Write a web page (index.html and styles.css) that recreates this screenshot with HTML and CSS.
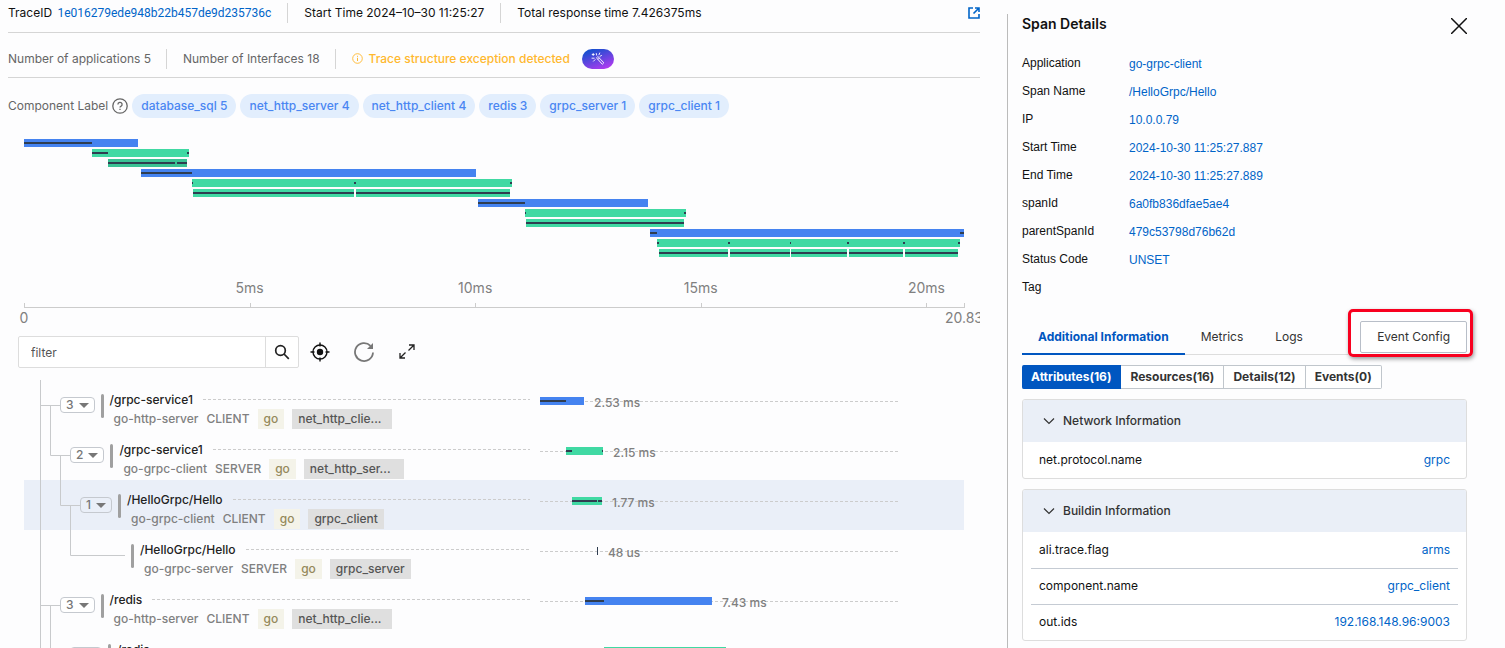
FILE: index.html
```html
<!DOCTYPE html>
<html lang="en">
<head>
<meta charset="utf-8">
<title>Trace Details</title>
<link rel="stylesheet" href="styles.css">
</head>
<body>
<div class="page">
<main class="trace">
  <header class="summary">
    <span class="item">TraceID <a class="hash" href="#">1e016279ede948b22b457de9d235736c</a></span>
    <span class="item">Start Time 2024–10–30 11:25:27</span>
    <span class="item">Total response time 7.426375ms</span>
    <a class="open" href="#" aria-label="Open in new window"><svg width="12" height="12" viewBox="0 0 12 12" fill="none" stroke="currentColor" stroke-width="1.6"><path d="M5 1H1v10h10V7M7 1h4v4M11 1 5.500 6.500"/></svg></a>
  </header>
  <div class="summary counts">
    <span class="item">Number of applications 5</span>
    <span class="item">Number of Interfaces 18</span>
    <span class="item warn"><svg width="11" height="11" viewBox="0 0 11 11" fill="none" stroke="currentColor"><circle cx="5.500" cy="5.500" r="4.800" stroke-width=".9"/><path d="M5.500 4.800v3.200M5.500 2.800v1"/></svg>Trace structure exception detected</span>
    <button class="magic" aria-label="Analyze"><svg width="14" height="14" viewBox="0 0 14 14" fill="none" stroke="#fff" stroke-width=".9" stroke-linecap="round"><path d="m5.800 5.600 1.100-1.100 5.900 6.300-1.200 1.200zM7.200 7.200l1.100-1.100M8 2.800 8.700 1M9 4.300l1.500-.8M1.200 2.500h2M2.200 1.500v2M1 6.200h2.200M2.500 9.200l1.600-1.600M5.300 1.500l.3 1.600"/></svg></button>
  </div>
  <div class="components">
    <span>Component Label</span>
    <svg width="16" height="16" viewBox="0 0 16 16" fill="none" stroke="#666" stroke-width="1.300"><circle cx="8" cy="8" r="7.200"/><path d="M5.900 6.400a2.100 2.100 0 1 1 3 1.900c-.6.3-.9.600-.9 1.300M8 10.700v1.400"/></svg>
    <span class="chip">database_sql 5</span><span class="chip">net_http_server 4</span><span class="chip">net_http_client 4</span><span class="chip">redis 3</span><span class="chip">grpc_server 1</span><span class="chip">grpc_client 1</span>
  </div>
  <section class="chart" aria-label="Trace timeline">
    <svg class="flame" viewBox="0 0 940 118" preserveAspectRatio="none" shape-rendering="crispEdges">
      <g class="blue"><path d="M0 0h114v8H0zM117 30h335v8H117zM454 60h170v8H454zM626 90h314v8H626z"/></g>
      <g class="green"><path d="M68 10h97v8H68zM168 40h320v8H168zM169 50h161v8H169zM332 50h154v8H332zM501 70h161v8H501zM502 80h158v8H502zM633 100h303v8H633zM635 110h69v8h-69zM706 110h60v8h-60zM767 110h56v8h-56zM825 110h54v8h-54zM881 110h53v8h-53z"/></g>
      <path class="dimgreen" d="M84 20h79v8H84z"/>
      <path class="dark" d="M0 3h68v2H0zM68 13h16v2H68zM163 13h2v2h-2zM84 23h67v2H84zM153 23h10v2h-10zM117 33h51v2h-51zM168 43h1v2h-1zM330 43h2v2h-2zM486 43h2v2h-2zM169 53h161v2H169zM332 53h154v2H332zM454 63h47v2h-47zM501 73h1v2h-1zM660 73h2v2h-2zM502 83h158v2H502zM626 93h7v2h-7zM936 93h4v2h-4zM633 103h2v2h-2zM704 103h2v2h-2zM766 103h1v2h-1zM823 103h2v2h-2zM879 103h2v2h-2zM934 103h2v2h-2zM635 113h69v2h-69zM706 113h60v2h-60zM767 113h56v2h-56zM825 113h54v2h-54zM881 113h53v2h-53z"/>
    </svg>
    <svg class="axis" width="100%" height="50">
      <g shape-rendering="crispEdges"><rect x="0" y="28" width="100%" height="1"/><rect x="0" y="24" width="1" height="4"/><rect x="24.050%" y="24" width="1" height="4"/><rect x="48%" y="24" width="1" height="4"/><rect x="72%" y="24" width="1" height="4"/><rect x="96%" y="24" width="1" height="4"/><rect x="100%" y="24" width="1" height="5"/></g>
      <text x="24%" y="14">5ms</text><text x="48%" y="14">10ms</text><text x="72%" y="14">15ms</text><text x="96%" y="14">20ms</text><text x="0" y="44">0</text><text x="100%" y="44">20.83</text>
    </svg>
  </section>
  <div class="tools">
    <form class="filter"><input type="text" placeholder="filter" aria-label="filter"><button type="button" aria-label="Search"><svg width="16" height="16" viewBox="0 0 16 16" fill="none" stroke="#222" stroke-width="1.700"><circle cx="6.500" cy="6.500" r="4.800"/><path d="m10 10 4.800 4.800"/></svg></button></form>
    <button class="tool" aria-label="Locate"><svg width="20" height="20" viewBox="0 0 20 20" fill="none" stroke="#111" stroke-width="1.400"><circle cx="10" cy="10" r="7"/><circle cx="10" cy="10" r="3.200" fill="#111" stroke="none"/><path d="M10 .5v4M10 15.500v4M.5 10h4M15.500 10h4"/></svg></button>
    <button class="tool" aria-label="Refresh"><svg width="20" height="20" viewBox="0 0 20 20" fill="none" stroke="#777" stroke-width="1.800"><path d="M16.500 3.800A9 9 0 1 0 19 10.500"/><path d="M19 1v6h-6z" fill="#777" stroke="none"/></svg></button>
    <button class="tool" aria-label="Expand"><svg width="18" height="18" viewBox="0 0 18 18" fill="none" stroke="#222" stroke-width="1.300"><path d="M11 2h5v5M16 2l-5.500 5.500M7 15H2v-5M2 15l5.500-5.500"/></svg></button>
  </div>
  <div class="tree">
    <div class="row">
      <div class="node"><svg class="guide" width="36" height="50"><path d="M16.500 0v50M16 25.500h20M26.500 25v25"/></svg><button class="toggle">3<i></i></button><b class="mark"></b>
        <div class="info"><div class="name">/grpc-service1</div><div class="meta"><span>go-http-server</span><span>CLIENT</span><span class="lang">go</span><span class="comp cut">net_http_clie...</span></div></div></div>
      <div class="track"><svg class="bar" style="width:12.300%" viewBox="0 0 44 8" preserveAspectRatio="none"><path class="blue" d="M0 0h44v8H0z"/><path class="dark" d="M0 3h26v2H0z"/></svg><span>2.53 ms</span></div>
    </div>
    <div class="row">
      <div class="node"><svg class="guide" width="46" height="50"><path d="M16.500 0v50M26.500 0v25.500H46M36.500 25v25"/></svg><button class="toggle">2<i></i></button><b class="mark"></b>
        <div class="info"><div class="name">/grpc-service1</div><div class="meta"><span>go-grpc-client</span><span>SERVER</span><span class="lang">go</span><span class="comp cut">net_http_ser...</span></div></div></div>
      <div class="track"><svg class="bar" style="margin-left:7.260%;width:10.340%" viewBox="0 0 37 8" preserveAspectRatio="none"><path class="green" d="M0 0h37v8H0z"/><path class="dark" d="M0 3h6v2H0zM36 3h1v2h-1z"/></svg><span>2.15 ms</span></div>
    </div>
    <div class="row selected">
      <div class="node"><svg class="guide" width="56" height="50"><path d="M16.500 0v50M36.500 0v25.500H56M46.500 25v25"/></svg><button class="toggle">1<i></i></button><b class="mark"></b>
        <div class="info"><div class="name">/HelloGrpc/Hello</div><div class="meta"><span>go-grpc-client</span><span>CLIENT</span><span class="lang">go</span><span class="comp">grpc_client</span></div></div></div>
      <div class="track"><svg class="bar" style="margin-left:8.940%;width:8.380%" viewBox="0 0 30 8" preserveAspectRatio="none"><path class="green" d="M0 0h30v8H0z"/><path class="dark" d="M0 3h25v2H0zM26 3h4v2h-4z"/></svg><span>1.77 ms</span></div>
    </div>
    <div class="row">
      <div class="node"><svg class="guide" width="101" height="50"><path d="M16.500 0v50M46.500 0v25.500H101"/></svg><b class="mark"></b>
        <div class="info"><div class="name">/HelloGrpc/Hello</div><div class="meta"><span>go-grpc-server</span><span>SERVER</span><span class="lang">go</span><span class="comp">grpc_server</span></div></div></div>
      <div class="track"><svg class="bar" style="margin-left:15.920%;width:.280%" viewBox="0 0 1 8" preserveAspectRatio="none"><path class="dark" d="M0 0h1v8H0z"/></svg><span>48 us</span></div>
    </div>
    <div class="row">
      <div class="node"><svg class="guide" width="36" height="50"><path d="M16.500 0v50M16 25.500h20M26.500 25v25"/></svg><button class="toggle">3<i></i></button><b class="mark"></b>
        <div class="info"><div class="name">/redis</div><div class="meta"><span>go-http-server</span><span>CLIENT</span><span class="lang">go</span><span class="comp cut">net_http_clie...</span></div></div></div>
      <div class="track"><svg class="bar" style="margin-left:12.570%;width:35.470%" viewBox="0 0 127 8" preserveAspectRatio="none"><path class="blue" d="M0 0h127v8H0z"/><path class="dark" d="M0 3h19v2H0z"/></svg><span>7.43 ms</span></div>
    </div>
    <div class="row">
      <div class="node"><svg class="guide" width="46" height="50"><path d="M16.500 0v50M26.500 0v25.500H46M36.500 25v25"/></svg><button class="toggle" aria-label="Toggle"><i></i></button><b class="mark"></b>
        <div class="info"><div class="name">/redis</div></div></div>
      <div class="track"><svg class="bar" style="margin-left:17.880%;width:34.080%" viewBox="0 0 122 8" preserveAspectRatio="none"><path class="green" d="M0 0h122v8H0z"/></svg></div>
    </div>
  </div>
</main>
<aside class="details">
  <div class="head"><h2>Span Details</h2><button class="close" aria-label="Close"><svg width="16" height="16" viewBox="0 0 16 16" stroke="#111" stroke-width="1.500"><path d="m0 0 16 16M16 0 0 16"/></svg></button></div>
  <dl class="fields">
    <dt>Application</dt><dd><a href="#">go-grpc-client</a></dd>
    <dt>Span Name</dt><dd><a href="#">/HelloGrpc/Hello</a></dd>
    <dt>IP</dt><dd><a href="#">10.0.0.79</a></dd>
    <dt>Start Time</dt><dd>2024-10-30 11:25:27.887</dd>
    <dt>End Time</dt><dd>2024-10-30 11:25:27.889</dd>
    <dt>spanId</dt><dd>6a0fb836dfae5ae4</dd>
    <dt>parentSpanId</dt><dd>479c53798d76b62d</dd>
    <dt>Status Code</dt><dd>UNSET</dd>
    <dt>Tag</dt><dd></dd>
  </dl>
  <div class="tabbar">
    <div class="tabs" role="tablist"><button class="tab active" role="tab" aria-selected="true">Additional Information</button><button class="tab" role="tab">Metrics</button><button class="tab" role="tab">Logs</button></div>
    <div class="callout"><button class="config">Event Config</button></div>
  </div>
  <div class="group"><button class="on">Attributes(16)</button><button>Resources(16)</button><button>Details(12)</button><button>Events(0)</button></div>
  <section class="card">
    <button class="cardhead"><svg width="12" height="8" viewBox="0 0 12 8" fill="none" stroke="#333" stroke-width="1.200"><path d="m1 1.500 5 5 5-5"/></svg>Network Information</button>
    <table><tr><th scope="row">net.protocol.name</th><td>grpc</td></tr></table>
  </section>
  <section class="card">
    <button class="cardhead"><svg width="12" height="8" viewBox="0 0 12 8" fill="none" stroke="#333" stroke-width="1.200"><path d="m1 1.500 5 5 5-5"/></svg>Buildin Information</button>
    <table><tr><th scope="row">ali.trace.flag</th><td>arms</td></tr><tr><th scope="row">component.name</th><td>grpc_client</td></tr><tr><th scope="row">out.ids</th><td>192.168.148.96:9003</td></tr></table>
  </section>
</aside>
</div>
</body>
</html>
```
FILE: styles.css
```css
* { box-sizing: border-box; }
body { margin: 0; background: #fdfdfe; color: #111; font: 12px/20px Inter, "Liberation Sans", sans-serif; }
button, input { font: inherit; color: inherit; margin: 0; }
button { background: none; border: 0; padding: 0; }
a { color: #0064c8; text-decoration: none; }
svg { display: block; flex: none; }
.page { display: flex; height: 100vh; overflow: hidden; }
.trace { flex: 1; min-width: 0; padding: 0 27px 0 8px; }

.summary { display: flex; align-items: center; height: 33px; padding-bottom: 6px; border-bottom: 1px solid #d5d5d5; white-space: nowrap; }
.item + .item { margin-left: 16px; padding-left: 16px; border-left: 1px solid #d5d5d5; }
.hash { margin-left: 2px; font-family: Roboto, sans-serif; }
.open { margin-left: auto; }
.counts { height: 45px; padding: 7px 0 0; color: #666; }
.counts .item + .item { margin-left: 15px; }
.warn { display: flex; align-items: center; gap: 6px; color: #ffb82e; font-weight: 500; }
.magic { display: grid; place-items: center; width: 32px; height: 20px; margin-left: 12px; border-radius: 10px; background: linear-gradient(160deg, #1b4fd0 15%, #b03af0 90%); }
.components { display: flex; align-items: center; gap: 4px; margin-top: 16px; color: #666; white-space: nowrap; }
.chip { padding: 2px 9px; border-radius: 12px; background: #e2eefd; color: #4a86f2; font-weight: 500; }

.chart { padding: 21px 16px 0; overflow: hidden; }
.flame { width: 100%; height: 118px; }
.blue { fill: #4583f0; }
.green { fill: #40d9a3; }
.dimgreen { fill: #3ac294; }
.dark { fill: #2f3d50; }
.axis { margin-top: 22px; overflow: visible; fill: #ccc; }
.axis text { fill: #808080; font-size: 14px; text-anchor: middle; }

.tools { display: flex; align-items: center; gap: 24px; margin: 7px 0 12px 10px; }
.filter { display: flex; width: 281px; height: 32px; margin-right: -13px; border: 1px solid #ddd; border-radius: 2px; background: #fff; }
.filter input { flex: 1; min-width: 0; padding: 1px 12px 0; border: 0; outline: 0; background: none; }
.filter input::placeholder { color: #555; opacity: 1; }
.filter button { display: grid; place-items: center; width: 33px; border-left: 1px solid #ddd; }

.tree { margin: 0 16px; }
.row { display: grid; grid-template-columns: 506fr 358fr; gap: 10px; height: 50px; padding-right: 66px; white-space: nowrap; }
.selected { background: #eaeff8; }
.node { display: flex; min-width: 0; }
.guide { fill: none; stroke: #c8cacc; }
.toggle { display: flex; align-items: center; justify-content: center; gap: 5px; min-width: 32px; height: 16px; margin-top: 17px; padding: 0 5px; border: 1px solid #c5c9cf; border-radius: 4px; background: #fff; color: #777; font-weight: 500; }
.selected .toggle { background: none; }
.toggle i { border: 5px solid transparent; border-top-color: #777; border-bottom: 0; }
.mark { width: 3px; height: 24px; margin: 14px 6px 0; border-radius: 2px; background: #a0a0a0; }
.info { flex: 1; min-width: 0; padding-top: 10px; }
.name { display: flex; align-items: center; gap: 10px; color: #222; font-weight: 500; line-height: 19px; }
.name::after { content: ""; flex: 1; height: 1px; background: repeating-linear-gradient(90deg, #ccc 0 3px, transparent 3px 5px); }
.meta { display: flex; gap: 8px; padding-left: 4px; color: #808080; font-weight: 500; }
.lang { padding: 0 6px; background: #f4f3e9; color: #94895a; }
.comp { padding: 0 6px; background: #dfdfdf; color: #555; }
.cut { width: 100px; }
.track { display: flex; gap: 10px; align-self: start; margin-top: 12px; background: repeating-linear-gradient(90deg, #ccc 0 3px, transparent 3px 5px) 0 9px / 100% 1px no-repeat; color: #808080; font-weight: 500; line-height: 22px; }
.bar { height: 8px; margin-top: 5px; }

.details { width: 498px; margin-top: 14px; padding: 0 38px 0 14px; border-left: 1px solid #bbb; }
.head { display: flex; align-items: center; justify-content: space-between; height: 24px; }
h2 { margin: 0 0 4px; font-size: 14px; line-height: 20px; font-weight: 600; }
.fields { display: grid; grid-template-columns: 107px 1fr; grid-auto-rows: 28px; margin: 11px 0 0; font-family: "Liberation Sans", Arial, sans-serif; line-height: 28px; }
.fields dd { margin: 0; padding-top: 1px; color: #0064c8; }
.tabbar { display: flex; align-items: end; margin: 8px -6px 0 0; }
.tabs { display: flex; flex: 1; border-bottom: 1px solid #ddd; }
.tab { height: 36px; margin-bottom: -1px; padding: 2px 16px 0; border-bottom: 2px solid transparent; color: #333; }
.active { border-color: #0056c0; color: #0056c0; font-weight: 700; }
.callout { margin-bottom: -2px; padding: 9px 3px 1px 9px; border: 3px solid #f8001f; border-radius: 5px; box-shadow: 1px 2px 4px #0006; }
.config { height: 32px; padding: 0 16px; border: 1px solid #b8bec8; border-radius: 2px; background: #fff; color: #333; }
.group { display: flex; margin-top: 10px; }
.group button { height: 24px; padding: 0 9px; border: 1px solid #c0c6cc; border-left-width: 0; background: #fff; color: #333; font-weight: 700; }
.group button:last-child { border-radius: 0 2px 2px 0; }
.group .on { border-color: #0056c0; border-radius: 2px 0 0 2px; background: #0056c0; color: #fff; }
.card { margin-top: 10px; border: 1px solid #ddd; border-radius: 3px; background: #fff; overflow: hidden; }
.cardhead { display: flex; align-items: center; gap: 8px; width: 100%; height: 42px; padding-left: 20px; background: #eaeff7; color: #333; font-weight: 500; }
table { width: calc(100% - 16px); margin: 0 8px; border-collapse: collapse; }
th, td { height: 36px; padding: 0 8px; font-weight: 400; text-align: left; }
td { color: #0064c8; text-align: right; }
tr + tr { border-top: 1px solid #c5cbd3; }
```
